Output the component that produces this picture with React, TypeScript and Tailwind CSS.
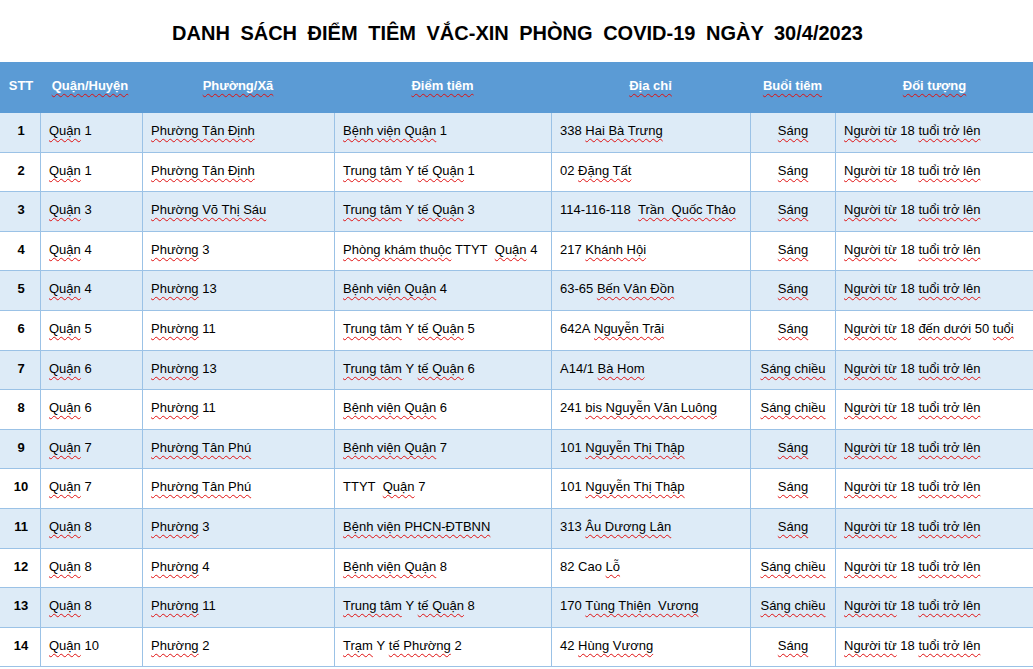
const rows = [
  ["1", "Quận 1", "Phường Tân Định", "Bệnh viện Quận 1", "338 Hai Bà Trưng", "Sáng", "Người từ 18 tuổi trở lên"],
  ["2", "Quận 1", "Phường Tân Định", "Trung tâm Y tế Quận 1", "02 Đặng Tất", "Sáng", "Người từ 18 tuổi trở lên"],
  ["3", "Quận 3", "Phường Võ Thị Sáu", "Trung tâm Y tế Quận 3", "114-116-118  Trần  Quốc Thảo", "Sáng", "Người từ 18 tuổi trở lên"],
  ["4", "Quận 4", "Phường 3", "Phòng khám thuộc TTYT  Quận 4", "217 Khánh Hội", "Sáng", "Người từ 18 tuổi trở lên"],
  ["5", "Quận 4", "Phường 13", "Bệnh viện Quận 4", "63-65 Bến Vân Đồn", "Sáng", "Người từ 18 tuổi trở lên"],
  ["6", "Quận 5", "Phường 11", "Trung tâm Y tế Quận 5", "642A Nguyễn Trãi", "Sáng", "Người từ 18 đến dưới 50 tuổi"],
  ["7", "Quận 6", "Phường 13", "Trung tâm Y tế Quận 6", "A14/1 Bà Hom", "Sáng chiều", "Người từ 18 tuổi trở lên"],
  ["8", "Quận 6", "Phường 11", "Bệnh viện Quận 6", "241 bis Nguyễn Văn Luông", "Sáng chiều", "Người từ 18 tuổi trở lên"],
  ["9", "Quận 7", "Phường Tân Phú", "Bệnh viện Quận 7", "101 Nguyễn Thị Thập", "Sáng", "Người từ 18 tuổi trở lên"],
  ["10", "Quận 7", "Phường Tân Phú", "TTYT  Quận 7", "101 Nguyễn Thị Thập", "Sáng", "Người từ 18 tuổi trở lên"],
  ["11", "Quận 8", "Phường 3", "Bệnh viện PHCN-ĐTBNN", "313 Âu Dương Lân", "Sáng", "Người từ 18 tuổi trở lên"],
  ["12", "Quận 8", "Phường 4", "Bệnh viện Quận 8", "82 Cao Lỗ", "Sáng chiều", "Người từ 18 tuổi trở lên"],
  ["13", "Quận 8", "Phường 11", "Trung tâm Y tế Quận 8", "170 Tùng Thiện  Vương", "Sáng chiều", "Người từ 18 tuổi trở lên"],
  ["14", "Quận 10", "Phường 2", "Trạm Y tế Phường 2", "42 Hùng Vương", "Sáng", "Người từ 18 tuổi trở lên"],
];

const extraFlagged = new Set(["Hai", "Trung", "Hom", "bis"]);

// mimic the spell-check squiggles: words with diacritics (and a few others) get a red wavy line
const isFlagged = (w: string) => /[^\x00-\x7F]/.test(w) || extraFlagged.has(w);

const Squiggle = ({ text }: { text: string }) => {
  const parts = text.split(/(\s+)/);
  const groups: { flagged: boolean; text: string }[] = [];
  parts.forEach((p, i) => {
    if (/^\s+$/.test(p)) {
      const prev = groups[groups.length - 1];
      const next = parts[i + 1];
      if (prev && prev.flagged && next && isFlagged(next)) prev.text += p;
      else groups.push({ flagged: false, text: p });
      return;
    }
    if (!p) return;
    const f = isFlagged(p);
    const prev = groups[groups.length - 1];
    if (prev && prev.flagged && f && /\s$/.test(prev.text)) prev.text += p;
    else groups.push({ flagged: f, text: p });
  });
  return (
    <>
      {groups.map((g, i) =>
        g.flagged ? (
          <span
            key={i}
            className="underline decoration-wavy decoration-[#e01010] decoration-1 underline-offset-[3px]"
          >
            {g.text}
          </span>
        ) : (
          <span key={i}>{g.text}</span>
        )
      )}
    </>
  );
};

const cols = "grid grid-cols-[40px_102px_192px_217px_199px_85px_205px]";

const App = () => {
  return (
    <div
      className="w-[1033px] h-[669px] overflow-hidden bg-white"
      style={{ fontFamily: '"Liberation Sans", Arial, sans-serif' }}
    >
      {/* Title */}
      <div className="h-[62px] flex items-center justify-center pl-[2px] pt-[4px]">
        <h1 className="text-[20px] font-bold text-black [word-spacing:5px] whitespace-pre">
          DANH SÁCH ĐIỂM TIÊM VẮC-XIN PHÒNG COVID-19 NGÀY 30/4/2023
        </h1>
      </div>

      <div className="w-[1040px]">
        {/* Header */}
        <div className={`${cols} h-[51px] bg-[#5b9bd5] text-white text-[13px] font-bold pb-[3px]`}>
          <div className="flex items-center justify-center pl-[2px]">STT</div>
          <div className="flex items-center justify-center pr-[2px]">
            <Squiggle text="Quận/Huyện" />
          </div>
          <div className="flex items-center justify-center">
            <Squiggle text="Phường/Xã" />
          </div>
          <div className="flex items-center justify-center">
            <Squiggle text="Điểm tiêm" />
          </div>
          <div className="flex items-center justify-center">
            <Squiggle text="Địa chỉ" />
          </div>
          <div className="flex items-center justify-center">
            <Squiggle text="Buổi tiêm" />
          </div>
          <div className="flex items-center justify-center pr-[6px]">
            <Squiggle text="Đối tượng" />
          </div>
        </div>

        {/* Body */}
        {rows.map((r, i) => (
          <div
            key={r[0]}
            className={`${cols} h-[39.6px] text-[13px] text-black border-b border-[#9bc2e6] ${
              i % 2 === 0 ? "bg-[#ddebf7]" : "bg-white"
            }`}
          >
            <div className="flex items-center justify-center font-bold pb-[3px] pl-[2px]">{r[0]}</div>
            {r.slice(1).map((c, j) => (
              <div
                key={j}
                className={`flex items-center border-l border-[#9bc2e6] whitespace-pre pb-[3px] ${
                  j === 4 ? "justify-center" : "pl-[8px]"
                }`}
              >
                <Squiggle text={c} />
              </div>
            ))}
          </div>
        ))}
      </div>
    </div>
  );
};

export default App;
